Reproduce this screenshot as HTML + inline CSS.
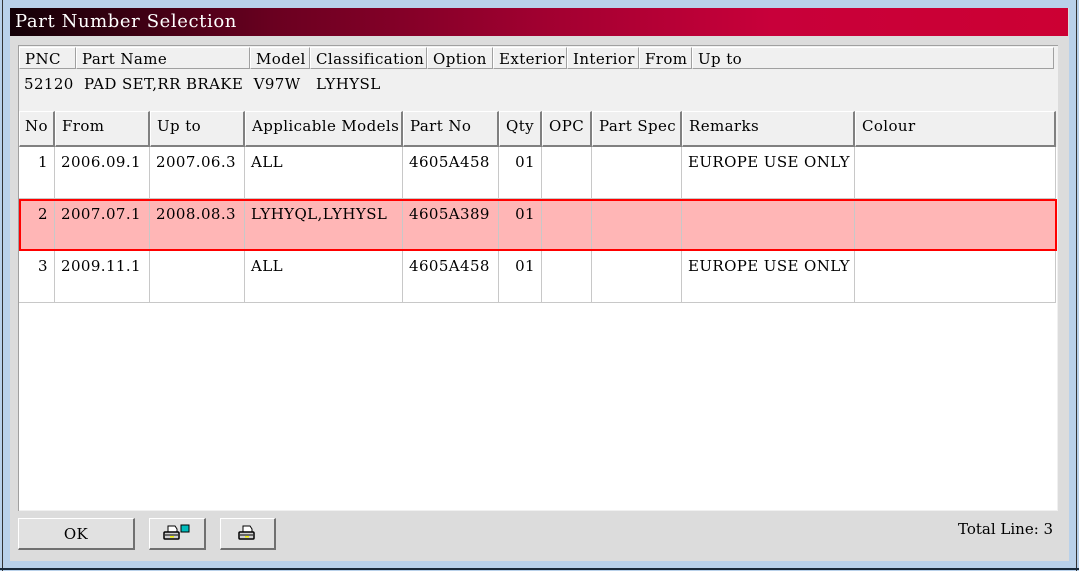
<!DOCTYPE html><html><head><style>
body{margin:0;width:1079px;height:571px;overflow:hidden;background:#fff;font-family:"DejaVu Serif","Liberation Serif",serif;font-size:15px;letter-spacing:0.4px;color:#000;position:relative}
.a{position:absolute}
.hc{position:absolute;top:0;height:22px;border:1px solid #fff;border-right-color:#a0a0a0;border-bottom-color:#a0a0a0;box-sizing:border-box;padding-left:5px;line-height:23px;background:#f0f0f0;white-space:nowrap;overflow:hidden}
.gh{position:absolute;top:0;height:36px;border:1px solid #fff;border-right:2px solid #808080;border-bottom:2px solid #808080;box-sizing:border-box;padding-left:6px;line-height:28px;background:#f0f0f0;white-space:nowrap;overflow:hidden}
.c{position:absolute;height:52px;border-right:1px solid #c8c8c8;border-bottom:1px solid #c8c8c8;box-sizing:border-box;padding:5px 6px;line-height:20px;white-space:nowrap;overflow:hidden}
.btn{position:absolute;top:518px;height:32px;background:#e1e1e1;border:1px solid #fff;border-right:2px solid #707070;border-bottom:2px solid #707070;box-sizing:border-box;text-align:center;line-height:30px}
</style></head><body>
<div class="a" style="left:0;top:0;width:1079px;height:571px;background:#b9d1ea"></div>
<div class="a" style="left:2px;top:0;width:1px;height:571px;background:#333"></div>
<div class="a" style="left:1076px;top:0;width:1px;height:571px;background:#333"></div>
<div class="a" style="left:0;top:568px;width:1079px;height:2px;background:#1a2a3a"></div>
<div class="a" style="left:10px;top:8px;width:1059px;height:553px;background:#dcdcdc"></div>
<div class="a" style="left:10px;top:8px;width:1058px;height:28px;background:linear-gradient(90deg,#120006 0%,#6a0020 25%,#a00030 50%,#c8003a 72%,#cc0033 100%);color:#fff;font-size:18px;letter-spacing:0.6px;line-height:28px;padding-left:5px;box-sizing:border-box">Part Number Selection</div>
<div class="a" style="left:18px;top:45px;width:1040px;height:466px;background:#f0f0f0;border-left:1px solid #a0a0a0;border-top:1px solid #a0a0a0;box-sizing:border-box"></div>
<div class="a" style="left:19px;top:47px;width:1036px;height:22px">
<div class="hc" style="left:0;width:57px">PNC</div>
<div class="hc" style="left:57px;width:174px">Part Name</div>
<div class="hc" style="left:231px;width:60px">Model</div>
<div class="hc" style="left:291px;width:117px">Classification</div>
<div class="hc" style="left:408px;width:66px">Option</div>
<div class="hc" style="left:474px;width:74px">Exterior</div>
<div class="hc" style="left:548px;width:72px">Interior</div>
<div class="hc" style="left:620px;width:53px">From</div>
<div class="hc" style="left:673px;width:362px">Up to</div>
</div>
<div class="a" style="left:24px;top:74px;white-space:pre;line-height:20px">52120  PAD SET,RR BRAKE  V97W   LYHYSL</div>
<div class="a" style="left:19px;top:111px;width:1038px;height:36px">
<div class="gh" style="left:0;width:36px;padding-left:5px">No</div>
<div class="gh" style="left:36px;width:95px">From</div>
<div class="gh" style="left:131px;width:95px">Up to</div>
<div class="gh" style="left:226px;width:158px">Applicable Models</div>
<div class="gh" style="left:384px;width:96px">Part No</div>
<div class="gh" style="left:480px;width:43px">Qty</div>
<div class="gh" style="left:523px;width:50px">OPC</div>
<div class="gh" style="left:573px;width:90px">Part Spec</div>
<div class="gh" style="left:663px;width:173px">Remarks</div>
<div class="gh" style="left:836px;width:201px">Colour</div>
</div>
<div class="a" style="left:19px;top:147px;width:1038px;height:363px;background:#fff">
<div class="c" style="left:0;top:0;width:36px;text-align:right">1</div>
<div class="c" style="left:36px;top:0;width:95px">2006.09.1</div>
<div class="c" style="left:131px;top:0;width:95px">2007.06.3</div>
<div class="c" style="left:226px;top:0;width:158px">ALL</div>
<div class="c" style="left:384px;top:0;width:96px">4605A458</div>
<div class="c" style="left:480px;top:0;width:43px;text-align:right">01</div>
<div class="c" style="left:523px;top:0;width:50px"></div>
<div class="c" style="left:573px;top:0;width:90px"></div>
<div class="c" style="left:663px;top:0;width:173px">EUROPE USE ONLY</div>
<div class="c" style="left:836px;top:0;width:201px"></div>
<div class="a" style="left:0;top:52px;width:1037px;height:52px;background:#ffb6b6"></div>
<div class="c" style="left:0;top:52px;width:36px;text-align:right">2</div>
<div class="c" style="left:36px;top:52px;width:95px">2007.07.1</div>
<div class="c" style="left:131px;top:52px;width:95px">2008.08.3</div>
<div class="c" style="left:226px;top:52px;width:158px">LYHYQL,LYHYSL</div>
<div class="c" style="left:384px;top:52px;width:96px">4605A389</div>
<div class="c" style="left:480px;top:52px;width:43px;text-align:right">01</div>
<div class="c" style="left:523px;top:52px;width:50px"></div>
<div class="c" style="left:573px;top:52px;width:90px"></div>
<div class="c" style="left:663px;top:52px;width:173px"></div>
<div class="c" style="left:836px;top:52px;width:201px"></div>
<div class="a" style="left:0;top:52px;width:1038px;height:52px;border:2px solid #f00;box-sizing:border-box"></div>
<div class="c" style="left:0;top:104px;width:36px;text-align:right">3</div>
<div class="c" style="left:36px;top:104px;width:95px">2009.11.1</div>
<div class="c" style="left:131px;top:104px;width:95px"></div>
<div class="c" style="left:226px;top:104px;width:158px">ALL</div>
<div class="c" style="left:384px;top:104px;width:96px">4605A458</div>
<div class="c" style="left:480px;top:104px;width:43px;text-align:right">01</div>
<div class="c" style="left:523px;top:104px;width:50px"></div>
<div class="c" style="left:573px;top:104px;width:90px"></div>
<div class="c" style="left:663px;top:104px;width:173px">EUROPE USE ONLY</div>
<div class="c" style="left:836px;top:104px;width:201px"></div>
</div>
<div class="btn" style="left:18px;width:117px">OK</div>
<div class="btn" style="left:149px;width:57px"><svg width="30" height="20" viewBox="0 0 30 20" style="margin-top:5px"><path d="M6 2h7l2 3v3H6z" fill="#fff" stroke="#000"/><rect x="2" y="8" width="15" height="7" rx="1" fill="#d0d0d0" stroke="#000" stroke-width="1.5"/><line x1="3" y1="11" x2="16" y2="11" stroke="#000"/><rect x="8" y="12" width="4" height="1.5" fill="#ee0"/><rect x="19" y="1" width="8" height="7" fill="#0bb" stroke="#000"/></svg></div>
<div class="btn" style="left:220px;width:56px"><svg width="22" height="20" viewBox="0 0 22 20" style="margin-top:5px"><path d="M6 2h7l2 3v3H6z" fill="#fff" stroke="#000"/><rect x="2" y="8" width="15" height="7" rx="1" fill="#d0d0d0" stroke="#000" stroke-width="1.5"/><line x1="3" y1="11" x2="16" y2="11" stroke="#000"/><rect x="8" y="12" width="4" height="1.5" fill="#ee0"/></svg></div>
<div class="a" style="left:958px;top:519px;line-height:20px;letter-spacing:0">Total Line: 3</div>
</body></html>
